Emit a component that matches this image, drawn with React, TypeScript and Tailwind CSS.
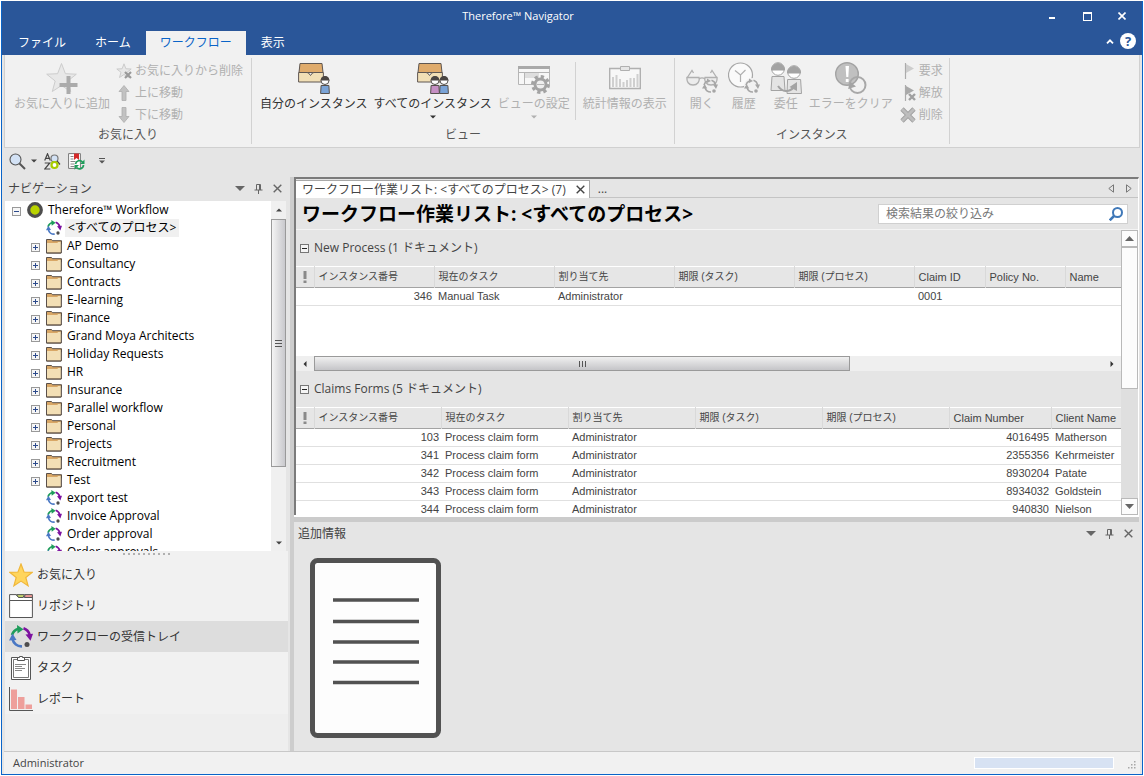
import { useState } from 'react';
import type { ReactNode } from 'react';
import clsx from 'clsx';

/* ---------- icons ---------- */

function WorkflowIcon({ className }: { className: string }) {
  return (
    <svg viewBox="0 0 24 24" className={className} fill="none">
      <path d="M3 10A9.500 9.500 0 0 1 9.500 3.800" stroke="#1f9d5b" strokeWidth="2.600" />
      <path d="M8 0l6.500 4.300L8.500 8.500z" fill="#1f9d5b" />
      <path d="M14.500 3.300a9.500 9.500 0 0 1 6.200 6.700" stroke="#7d12a0" strokeWidth="2.600" />
      <path d="M16.500 9.500l7.500-.8-2.500 7z" fill="#7d12a0" />
      <path d="M3.500 14a9 9 0 0 0 9.500 7.300" stroke="#4a78c4" strokeWidth="2.600" />
      <path d="M0 15.500l3.500-7 4 6.500z" fill="#4a78c4" />
      <circle cx="18" cy="19.500" r="2.500" fill="#4d4d4d" />
    </svg>
  );
}

function FolderIcon() {
  return (
    <svg viewBox="0 0 16 16" className="h-4 w-4 shrink-0">
      <path d="M.5 15V1.500h5l1 1.200h9V6H15v9z" fill="#d9a766" stroke="#5a5049" />
      <path d="M1 14.500V5h10.200l1-1H15v10.500z" fill="#f3dfb5" />
      <path d="M.5 15h14.800V3" fill="none" stroke="#5a5049" />
    </svg>
  );
}

function BigStarAddIcon() {
  return (
    <svg viewBox="0 0 32 32" className="h-8 w-8">
      <path
        d="M15.500 1.500l3.900 10.200 10.900.5-8.500 6.800 2.900 10.500-9.200-6-9.200 6L9.200 19 .7 12.200l10.900-.5z"
        fill="#e8e8e8"
        stroke="#cdcdcd"
      />
      <path d="M20.500 14h4v7h7v4h-7v7h-4v-7h-7v-4h7z" fill="#ababab" />
    </svg>
  );
}

function SmallStarRemoveIcon() {
  return (
    <svg viewBox="0 0 16 16" className="h-4 w-4">
      <path d="M8 .8l1.900 5 5.300.2-4.200 3.300 1.500 5.200L8 11.500l-4.500 3L5 9.300.8 6l5.300-.2z" fill="#e8e8e8" stroke="#cbcbcb" />
      <path d="M9 9l6 6M15 9l-6 6" stroke="#9a9a9a" strokeWidth="2.200" />
    </svg>
  );
}

function ArrowIcon({ down }: { down?: boolean }) {
  return (
    <svg viewBox="0 0 16 16" className="h-4 w-4">
      <path
        d={down ? 'M8 15.500l5-6h-3V.5H6v9H3z' : 'M8 .5l5 6h-3v9H6v-9H3z'}
        fill="#c2c2c2"
        stroke="#adadad"
        strokeWidth=".8"
      />
    </svg>
  );
}

function Tray() {
  return (
    <>
      <path d="M2 1.500h22l1 9H1z" fill="#dfab6c" stroke="#5f5752" />
      <path d="M.6 10.500H9l1.500.5 2 2.500 2-2.500 1.500-.5h9.400v9.500H.6z" fill="#f1dfb6" stroke="#5f5752" />
    </>
  );
}

function Person({ x, color }: { x: number; color: string }) {
  return (
    <g transform={`translate(${x} 0)`}>
      <path d="M.6 31.500l.5-8h7.800l.5 8z" fill={color} stroke="#55504d" />
      <circle cx="5" cy="18.500" r="4" fill="#fff" stroke="#55504d" />
      <path d="M.6 18.500a4.400 4.400 0 0 1 8.800 0z" fill="#4a4543" />
    </g>
  );
}

function MyInstancesIcon() {
  return (
    <svg viewBox="0 0 32 32" className="h-8 w-8">
      <Tray />
      <Person x={22} color="#7aa3d6" />
    </svg>
  );
}

function AllInstancesIcon() {
  return (
    <svg viewBox="0 0 32 32" className="h-8 w-8">
      <Tray />
      <Person x={13} color="#c58fc4" />
      <Person x={22} color="#7aa3d6" />
    </svg>
  );
}

function ViewSettingsIcon() {
  return (
    <svg viewBox="0 0 32 32" className="h-8 w-8" fill="none">
      <path d="M.5 4.500h31v18H.5z" fill="#f7f7f7" stroke="#b5b5b5" />
      <path d="M0 4h32v3H0z" fill="#a9a9a9" />
      <path d="M1 10.500h31M6.500 10v12" stroke="#b5b5b5" />
      <path d="M7 11h14v5H7z" fill="#dedede" />
      <circle cx="22.500" cy="22.500" r="8" stroke="#a3a3a3" strokeWidth="3" strokeDasharray="3.300 2.980" />
      <circle cx="22.500" cy="22.500" r="5.500" stroke="#a3a3a3" strokeWidth="3" fill="#eee" />
      <path d="M19 22.500h7" stroke="#b5b5b5" />
    </svg>
  );
}

function StatisticsIcon() {
  return (
    <svg viewBox="0 0 32 32" className="h-8 w-8" fill="none">
      <path d="M.7 6.500h30.600v20H.7z" fill="#f7f7f7" stroke="#b0b0b0" strokeWidth="1.400" />
      <path d="M11.500 4.500h9v4h-9z" fill="#e6e6e6" stroke="#b0b0b0" />
      <path
        d="M4 25v-10M7.500 25v-12M11 25v-8M14.500 25v-5M18 25v-7M21.500 25v-9M25 25v-9M28.500 25V12"
        stroke="#cfcfcf"
        strokeWidth="2"
      />
    </svg>
  );
}

function GreyCycle() {
  return (
    <g transform="translate(16 16)" fill="none" stroke="#a6a6a6" strokeWidth="1.600">
      <path d="M2 7a6 6 0 0 1 3.500-4M9.500 2.200a6 6 0 0 1 4 5M3 9.500a6 6 0 0 0 6 4.500" />
      <path d="M5 .5L9 3 5 5zM11 6.500h5l-2 4.500zM0 10.500l2.700-4.500 2.500 4.500z" fill="#a6a6a6" stroke="none" />
      <circle cx="12" cy="13" r="1.800" fill="#a6a6a6" stroke="none" />
    </g>
  );
}

function GlassesIcon() {
  return (
    <svg viewBox="0 0 32 32" className="h-8 w-8" fill="none" stroke="#b0b0b0" strokeWidth="1.300">
      <path d="M1 16L6 8.500l1.500 2.500M31 16L26 8.500 24.500 11" />
      <path d="M1 15.500h12c1 4-1.500 7.500-6 7.500s-6.500-3.500-6-7.500zM19 15.500h12c.5 4-1.500 7.500-6 7.500s-7-3.500-6-7.500z" fill="#ececec" />
      <path d="M13 17c2-1.500 4-1.500 6 0" />
      <GreyCycle />
    </svg>
  );
}

function HistoryIcon() {
  return (
    <svg viewBox="0 0 32 32" className="h-8 w-8" fill="none">
      <circle cx="12.500" cy="13" r="12" fill="#fafafa" stroke="#a6a6a6" strokeWidth="1.200" />
      <path d="M7 8.500l5.500 4.500 5-5M12.500 13v7" stroke="#b0b0b0" strokeWidth="1.200" />
      <circle cx="24" cy="24" r="8" fill="#f1f1f1" />
      <GreyCycle />
    </svg>
  );
}

function DelegateIcon() {
  return (
    <svg viewBox="0 0 32 32" className="h-8 w-8" fill="#e4e4e4" stroke="#a3a3a3">
      <path d="M1 28.500l1-14h12l1 14zM17 31.500l.6-14h13l.9 14z" />
      <circle cx="8" cy="7" r="6.300" fill="#fff" />
      <circle cx="24" cy="10" r="6.300" fill="#fff" />
      <path d="M1.500 8a6.500 6.500 0 0 1 13 0zM17.500 11a6.500 6.500 0 0 1 13 0z" fill="#a3a3a3" />
      <path d="M8 24c4 6 11 7 16 1" fill="none" strokeWidth="2" />
      <path d="M19.500 25l7.500-5v9z" fill="#a3a3a3" stroke="none" />
    </svg>
  );
}

function ClearErrorIcon() {
  return (
    <svg viewBox="0 0 32 32" className="h-8 w-8" fill="none">
      <circle cx="12" cy="12" r="11.300" fill="#c0c0c0" stroke="#a3a3a3" strokeWidth="1.400" />
      <path d="M10.500 4h3.500l-.7 11h-2zM10.800 17h2.800v3h-2.800z" fill="#fff" />
      <circle cx="22.500" cy="23" r="8" stroke="#a8a8a8" strokeWidth="2" />
      <path d="M13 27l2.500-7 5.500 4.500z" fill="#a3a3a3" />
    </svg>
  );
}

function FlagIcon({ cross }: { cross?: boolean }) {
  return (
    <svg viewBox="0 0 16 16" className="h-4 w-4" fill="none">
      <path d="M5.500 0v16" stroke="#ababab" strokeWidth="1.200" />
      <path d="M6 1l8 4.500L6 10z" fill={cross ? '#a9a9a9' : '#cdcdcd'} />
      {cross && <path d="M9 9l6 6M15 9l-6 6" stroke="#a0a0a0" strokeWidth="2.400" />}
    </svg>
  );
}

function DeleteIcon() {
  return (
    <svg viewBox="0 0 16 16" className="h-4 w-4">
      <path d="M2 2l12 12M14 2L2 14" stroke="#9f9f9f" strokeWidth="4.600" />
      <path d="M2 2l12 12M14 2L2 14" stroke="#bdbdbd" strokeWidth="3" />
    </svg>
  );
}

function Caret({ className }: { className?: string }) {
  return (
    <svg viewBox="0 0 6 4" className={clsx('h-1 w-1.5', className)}>
      <path d="M0 .5h6L3 3.500z" fill="currentColor" />
    </svg>
  );
}

function CloseGlyph() {
  return (
    <svg viewBox="0 0 9 9" className="h-[9px] w-[9px]" stroke="currentColor" strokeWidth="1.400">
      <path d="M.7.7l7.600 7.600M8.300.7L.7 8.300" />
    </svg>
  );
}

function PanelButtons() {
  return (
    <div className="flex items-center gap-2 text-[#666]">
      <button aria-label="メニュー" className="flex h-4 w-[11px] items-center justify-center">
        <svg viewBox="0 0 10 5" className="h-[5px] w-[10px]"><path d="M0 0h10L5 5z" fill="currentColor" /></svg>
      </button>
      <button aria-label="固定" className="flex h-4 w-[11px] items-center justify-center">
        <svg viewBox="0 0 9 10" className="h-[10px] w-[9px]" fill="none" stroke="currentColor">
          <path d="M2.500 6V.5h4V6M5.500.5V6M.5 6h8M4.500 6v4" />
        </svg>
      </button>
      <button aria-label="閉じる" className="flex h-4 w-[11px] items-center justify-center">
        <CloseGlyph />
      </button>
    </div>
  );
}

/* ---------- ribbon ---------- */

interface BigButtonProps {
  icon: ReactNode;
  label: string;
  enabled?: boolean;
  menu?: boolean;
  className?: string;
}

function BigButton({ icon, label, enabled, menu, className }: BigButtonProps) {
  return (
    <button
      disabled={!enabled}
      className={clsx(
        'flex flex-col items-center whitespace-nowrap',
        enabled ? 'text-[#333]' : 'text-[#b0b0b0]',
        className,
      )}
    >
      {icon}
      <span className="leading-5">{label}</span>
      {menu && <Caret className="mt-px" />}
    </button>
  );
}

function SmallButton({ icon, label }: { icon: ReactNode; label: string }) {
  return (
    <button disabled className="flex h-[22px] items-center gap-[3px] whitespace-nowrap text-[#b0b0b0]">
      {icon}
      <span>{label}</span>
    </button>
  );
}

function RibbonGroup({ title, className, children }: { title: string; className?: string; children: ReactNode }) {
  return (
    <div className="my-[3px] flex flex-col border-r border-[#d2d2d2]">
      <div className={clsx('flex flex-1 items-start', className)}>{children}</div>
      <div className="text-center leading-[18px] text-[#555]">{title}</div>
    </div>
  );
}

function Ribbon() {
  return (
    <div className="mx-0.5 flex h-[93px] border-x border-b border-[#d0d0d0] bg-[#f1f1f1]">
      <RibbonGroup title="お気に入り" className="gap-1.5 pl-[9px] pr-2">
        <BigButton icon={<BigStarAddIcon />} label="お気に入りに追加" className="pt-1" />
        <div className="pt-0.5">
          <SmallButton icon={<SmallStarRemoveIcon />} label="お気に入りから削除" />
          <SmallButton icon={<ArrowIcon />} label="上に移動" />
          <SmallButton icon={<ArrowIcon down />} label="下に移動" />
        </div>
      </RibbonGroup>
      <RibbonGroup title="ビュー" className="gap-1.5 pt-1 pr-[7px] pl-2">
        <BigButton icon={<MyInstancesIcon />} label="自分のインスタンス" enabled />
        <BigButton icon={<AllInstancesIcon />} label="すべてのインスタンス" enabled menu />
        <BigButton icon={<ViewSettingsIcon />} label="ビューの設定" menu />
        <div className="-ml-px mr-px h-[58px] border-r border-[#d2d2d2]" />
        <BigButton icon={<StatisticsIcon />} label="統計情報の表示" />
      </RibbonGroup>
      <RibbonGroup title="インスタンス" className="gap-2.5 pr-1.5 pl-[11px]">
        <BigButton icon={<GlassesIcon />} label="開く" className="pt-1" />
        <BigButton icon={<HistoryIcon />} label="履歴" className="pt-1" />
        <BigButton icon={<DelegateIcon />} label="委任" className="pt-1" />
        <BigButton icon={<ClearErrorIcon />} label="エラーをクリア" className="-ml-[3px] pt-1" />
        <div className="-ml-[3px] pt-0.5">
          <SmallButton icon={<FlagIcon />} label="要求" />
          <SmallButton icon={<FlagIcon cross />} label="解放" />
          <SmallButton icon={<DeleteIcon />} label="削除" />
        </div>
      </RibbonGroup>
    </div>
  );
}

const ribbonTabs = ['ファイル', 'ホーム', 'ワークフロー', '表示'];

function TitleBar() {
  return (
    <header className="bg-[#2a5699] text-white">
      <div className="flex h-[30px] items-center">
        <h1 className="flex-1 text-center text-[11px]">Therefore™ Navigator</h1>
        <div className="flex w-[108px] shrink-0 items-center gap-[17px] pl-[9px]">
          <button aria-label="最小化" className="flex h-[18px] w-[18px] items-center justify-center">
            <span className="mt-1 h-0.5 w-1.5 bg-white" />
          </button>
          <button aria-label="最大化" className="flex h-[18px] w-[18px] items-center justify-center">
            <span className="h-[9px] w-[9px] border border-t-2 border-white" />
          </button>
          <button aria-label="閉じる" className="flex h-[18px] w-[18px] items-center justify-center">
            <svg viewBox="0 0 8 8" className="h-2 w-2" stroke="#fff" strokeWidth="1.600"><path d="M.5.5l7 7M7.500.5l-7 7" /></svg>
          </button>
        </div>
      </div>
      <div className="flex h-6 items-stretch justify-between pl-0.5">
        <nav className="flex gap-px">
          {ribbonTabs.map((tab) => (
            <button
              key={tab}
              className={clsx(
                'px-3.5',
                tab === 'ワークフロー' && 'bg-[#f1f1f1] text-[#0a64c8]',
              )}
            >
              {tab}
            </button>
          ))}
        </nav>
        <div className="flex items-center gap-1.5 pr-1.5 pb-1">
          <button aria-label="リボンを折りたたむ">
            <svg viewBox="0 0 8 5" className="h-[5px] w-2" fill="none" stroke="#fff" strokeWidth="1.800"><path d="M1 4.300l3-3 3 3" /></svg>
          </button>
          <button aria-label="ヘルプ" className="h-4 w-4 rounded-full bg-white text-[13px] leading-4 font-bold text-[#2a5699]">
            ?
          </button>
        </div>
      </div>
    </header>
  );
}

function QuickToolbar() {
  return (
    <div className="flex h-[29px] items-center pb-[3px] pl-[7px] text-[#444]">
      <button aria-label="検索" className="flex items-center gap-[5px]">
        <svg viewBox="0 0 17 17" className="h-[17px] w-[17px]" fill="none">
          <circle cx="6.500" cy="6.500" r="5.500" fill="#d3e2f5" stroke="#555" strokeWidth="1.100" />
          <path d="M10.500 10.500l5.500 5.500" stroke="#555" strokeWidth="2" />
        </svg>
        <Caret />
      </button>
      <button aria-label="索引検索" className="ml-[7px]">
        <svg viewBox="0 0 17 17" className="h-[17px] w-[17px]" fill="none" stroke="#444" strokeWidth="1.200">
          <path d="M.7 7.500L3.500.8l2.800 6.700M1.700 5.300h3.700M.7 10h5L.7 16h5.600" />
          <circle cx="10.500" cy="5.500" r="3.500" fill="#d3e2f5" stroke="#777" />
          <path d="M13 8l3 3.500" />
          <circle cx="10.500" cy="12" r="3" fill="#fff" stroke="#a8cc00" strokeWidth="2.200" />
        </svg>
      </button>
      <button aria-label="更新" className="ml-[7px]">
        <svg viewBox="0 0 17 17" className="h-[17px] w-[17px]" fill="none">
          <path d="M.6.6h11.800v14.800H.6z" fill="#fff" stroke="#777" />
          <path d="M2.500 3.500h3M2.500 6h3M2.500 8.500h5M2.500 11h4M2.500 13.500h4" stroke="#888" />
          <path d="M6 .5h5V7L8.500 5 6 7z" fill="#d42a2a" />
          <path d="M7.500 11a4 4 0 0 1 7-2M15.500 12a4 4 0 0 1-7 2.500" stroke="#1f9d5b" strokeWidth="1.700" />
          <path d="M16.500 6.500v4.500h-4.500zM6.500 16.800V12h4.500z" fill="#1f9d5b" />
        </svg>
      </button>
      <button aria-label="ツールバーのカスタマイズ" className="ml-3.5">
        <svg viewBox="0 0 6 6" className="h-1.5 w-1.5" fill="#555"><path d="M0 0h6v1H0zM0 2.500h6L3 5.500z" /></svg>
      </button>
    </div>
  );
}

/* ---------- navigation ---------- */

const folders = [
  'AP Demo', 'Consultancy', 'Contracts', 'E-learning', 'Finance', 'Grand Moya Architects',
  'Holiday Requests', 'HR', 'Insurance', 'Parallel workflow', 'Personal', 'Projects',
  'Recruitment', 'Test',
];
const processes = ['export test', 'Invoice Approval', 'Order approval', 'Order approvals'];

function Expander({ open }: { open?: boolean }) {
  return (
    <button
      aria-label={open ? '折りたたむ' : '展開'}
      className="mt-0.5 flex h-[9px] w-[9px] shrink-0 items-center justify-center border border-[#999] bg-[#f6f6f6]"
    >
      <svg viewBox="0 0 5 5" className="h-[5px] w-[5px]" stroke="#2c4a8c">
        <path d={open ? 'M0 2.500h5' : 'M0 2.500h5M2.500 0v5'} />
      </svg>
    </button>
  );
}

function NavTree() {
  return (
    <div className="flex min-h-0 flex-1 border-r-2 border-[#e5e5e5] bg-white">
      <ul className="min-w-0 flex-1 overflow-hidden text-[12px] text-black">
        <li className="flex h-[18px] items-center pl-[7px]">
          <Expander open />
          <svg viewBox="0 0 16 16" className="ml-1.5 h-4 w-4"><circle cx="8" cy="8" r="6.300" fill="#b9d300" stroke="#4d4d4d" strokeWidth="3.200" /></svg>
          <span className="ml-[5px]">Therefore™ Workflow</span>
        </li>
        <li className="flex h-[18px] items-center pl-[41px]">
          <WorkflowIcon className="h-4 w-4" />
          <button className="ml-[3px] bg-[#f0f0f0] px-[3px] leading-[18px]">&lt;すべてのプロセス&gt;</button>
        </li>
        {folders.map((name) => (
          <li key={name} className="flex h-[18px] items-center pl-[26px]">
            <Expander />
            <span className="ml-1.5"><FolderIcon /></span>
            <button className="ml-[5px]">{name}</button>
          </li>
        ))}
        {processes.map((name) => (
          <li key={name} className="flex h-[18px] items-center pl-[41px]">
            <WorkflowIcon className="h-4 w-4" />
            <button className="ml-[5px]">{name}</button>
          </li>
        ))}
      </ul>
      <div className="flex w-[15px] flex-col items-center bg-[#f0f0f0] text-[#444]">
        <Caret className="my-[7px] rotate-180" />
        <div className="flex h-[248px] w-full flex-col items-center justify-center gap-0.5 border border-[#9a9a9a] bg-linear-to-r from-[#f4f4f4] to-[#c9c9cd]">
          <span className="h-px w-[7px] bg-[#555]" />
          <span className="h-px w-[7px] bg-[#555]" />
          <span className="h-px w-[7px] bg-[#555]" />
        </div>
        <div className="flex-1" />
        <Caret className="my-1.5" />
      </div>
    </div>
  );
}

const sections = [
  {
    label: 'お気に入り',
    icon: (
      <svg viewBox="0 0 24 24" className="h-6 w-6">
        <path d="M12 1l3 8 8.300.3-6.500 5.200 2.300 8.300-7.100-4.700-7.100 4.700 2.300-8.300L.7 9.300 9 9z" fill="#ffd55c" stroke="#f0b73a" strokeWidth="1.200" />
      </svg>
    ),
  },
  {
    label: 'リポジトリ',
    icon: (
      <svg viewBox="0 0 24 24" className="h-6 w-6">
        <path d="M.6 6.500V.6H7L9 3h14.400v3.500z" fill="#fff" stroke="#555" />
        <path d="M7.500.6h8L14 3.500H9.500z" fill="#c3d46a" stroke="#555" />
        <path d="M16 .6h7.400v2.900H15.500z" fill="#ee9a96" stroke="#555" />
        <path d="M.6 6.500h22.800v17H.6z" fill="#fff" stroke="#555" />
      </svg>
    ),
  },
  { label: 'ワークフローの受信トレイ', icon: <WorkflowIcon className="h-6 w-6" /> },
  {
    label: 'タスク',
    icon: (
      <svg viewBox="0 0 24 24" className="h-6 w-6" fill="#fff" stroke="#555">
        <path d="M2.500 1.500h19v22h-19z" />
        <path d="M4.500 3.500h15v18h-15z" stroke="#777" />
        <path d="M8.500 4.500v-3h2v-1h3v1h2v3z" />
        <path d="M6 8.500h11M6 10.500h7M6 12.500h10M6 14.500h7" stroke="#888" />
      </svg>
    ),
  },
  {
    label: 'レポート',
    icon: (
      <svg viewBox="0 0 24 24" className="h-6 w-6">
        <path d="M2 2.500h6V22H2zM9 10h6.500v12H9zM16.500 17.500H23V22h-6.500z" fill="#ee9f9b" />
        <path d="M.5 0v23.500H24" fill="none" stroke="#555" />
      </svg>
    ),
  },
];

function NavPanel() {
  const [active, setActive] = useState(2);

  return (
    <aside className="flex w-[285px] shrink-0 flex-col pr-0.5">
      <div className="flex h-6 items-center justify-between pr-[5px] pb-px pl-[3px]">
        <h2 className="text-[#444]">ナビゲーション</h2>
        <PanelButtons />
      </div>
      <NavTree />
      <div className="flex h-2 items-start justify-center gap-[3px] bg-[#f1f1f1] pt-0.5">
        {Array.from({ length: 10 }, (_, i) => (
          <span key={i} className="h-0.5 w-0.5 bg-[#b0b0b0]" />
        ))}
      </div>
      <div className="bg-[#f1f1f1]">
        {sections.map((section, i) => (
          <button
            key={section.label}
            onClick={() => setActive(i)}
            className={clsx(
              'flex h-[31px] w-full items-center gap-1 pl-1 text-[#333]',
              i === active && 'bg-[#ddd]',
            )}
          >
            {section.icon}
            {section.label}
          </button>
        ))}
      </div>
      <div className="h-[37px] bg-[#eee]" />
    </aside>
  );
}

/* ---------- work list ---------- */

interface Column {
  title: string;
  width?: string;
  right?: boolean;
}

const newProcessColumns: Column[] = [
  { title: 'インスタンス番号', width: 'w-[120px]', right: true },
  { title: '現在のタスク', width: 'w-[120px]' },
  { title: '割り当て先', width: 'w-[120px]' },
  { title: '期限 (タスク)', width: 'w-[120px]' },
  { title: '期限 (プロセス)', width: 'w-[120px]' },
  { title: 'Claim ID', width: 'w-[71px]' },
  { title: 'Policy No.', width: 'w-[80px]' },
  { title: 'Name' },
];
const newProcessRows = [['346', 'Manual Task', 'Administrator', '', '', '0001', '', '']];

const claimsColumns: Column[] = [
  { title: 'インスタンス番号', width: 'w-[127px]', right: true },
  { title: '現在のタスク', width: 'w-[127px]' },
  { title: '割り当て先', width: 'w-[127px]' },
  { title: '期限 (タスク)', width: 'w-[127px]' },
  { title: '期限 (プロセス)', width: 'w-[127px]' },
  { title: 'Claim Number', width: 'w-[102px]', right: true },
  { title: 'Client Name' },
];
const claimsRows = [
  ['103', 'Process claim form', 'Administrator', '', '', '4016495', 'Matherson'],
  ['341', 'Process claim form', 'Administrator', '', '', '2355356', 'Kehrmeister'],
  ['342', 'Process claim form', 'Administrator', '', '', '8930204', 'Patate'],
  ['343', 'Process claim form', 'Administrator', '', '', '8934032', 'Goldstein'],
  ['344', 'Process claim form', 'Administrator', '', '', '940830', 'Nielson'],
];

function GroupHeader({ title }: { title: string }) {
  return (
    <div className="flex h-9 items-center gap-[5px] pl-1 text-[#444]">
      <button aria-label="折りたたむ" className="flex h-[9px] w-[9px] items-center justify-center border border-[#777] bg-[#f4f4f4]">
        <span className="h-px w-[5px] bg-[#222]" />
      </button>
      <h3>{title}</h3>
    </div>
  );
}

function WorkTable({ columns, rows }: { columns: Column[]; rows: string[][] }) {
  return (
    <table className="w-full table-fixed border-collapse bg-white font-['Liberation_Sans','Noto_Sans_CJK_JP',sans-serif] text-[11px] text-[#444]">
      <thead>
        <tr className="h-[21px] border-t border-b border-t-white border-b-[#a3a3a3] bg-[#e6e6e6]">
          <th aria-label="優先度" className="w-[18px] border-r border-[#d9d9d9] p-0">
            <svg viewBox="0 0 4 12" className="mx-auto h-3 w-1" fill="#8a8a8a"><path d="M.5 0h3v8h-3zM.5 9.500h3V12h-3z" /></svg>
          </th>
          {columns.map((col) => (
            <th
              key={col.title}
              className={clsx(
                'overflow-hidden border-r border-[#d9d9d9] p-0 pl-1 text-left font-normal whitespace-nowrap last:border-r-0',
                /^[A-Z]/.test(col.title) ? 'text-[11px]' : 'text-[10px]',
                col.width,
              )}
            >
              {col.title}
            </th>
          ))}
        </tr>
      </thead>
      <tbody>
        {rows.map((row) => (
          <tr key={row[0]} className="h-[18px] border-b border-[#e0e0e0]">
            <td />
            {row.map((cell, i) => (
              <td
                key={i}
                className={clsx(
                  'overflow-hidden p-0 leading-[17px] whitespace-nowrap',
                  columns[i].right ? 'pr-0.5 text-right' : 'pl-1',
                )}
              >
                {cell}
              </td>
            ))}
          </tr>
        ))}
      </tbody>
    </table>
  );
}

function HorizontalScrollbar() {
  return (
    <div className="flex h-[15px] items-center bg-[#efefef] text-[#333]">
      <Caret className="mx-1.5 rotate-90" />
      <div className="flex h-[15px] w-[65%] items-center justify-center gap-0.5 border border-[#9a9a9a] bg-linear-to-b from-[#f0f0f0] to-[#c5c5c8]">
        <span className="h-1.5 w-px bg-[#555]" />
        <span className="h-1.5 w-px bg-[#555]" />
        <span className="h-1.5 w-px bg-[#555]" />
      </div>
      <div className="flex-1" />
      <Caret className="mx-1.5 -rotate-90" />
    </div>
  );
}

function VerticalScrollbar() {
  return (
    <div className="flex w-[17px] shrink-0 flex-col bg-[#dfdfdf] text-[#666]">
      <div className="flex h-[17px] items-center justify-center border border-[#b9b9b9] bg-[#fcfcfc]">
        <svg viewBox="0 0 9 5" className="h-[5px] w-[9px]"><path d="M0 5h9L4.500 0z" fill="currentColor" /></svg>
      </div>
      <div className="h-[142px] border border-[#b9b9b9] bg-[#fcfcfc]" />
      <div className="flex-1" />
      <div className="flex h-[17px] items-center justify-center border border-[#b9b9b9] bg-[#fcfcfc]">
        <svg viewBox="0 0 9 5" className="h-[5px] w-[9px]"><path d="M0 0h9L4.500 5z" fill="currentColor" /></svg>
      </div>
    </div>
  );
}

function WorkList() {
  return (
    <section className="flex min-h-0 flex-1 flex-col border-t-2 border-r border-l-2 border-[#7b7b7b] border-r-white">
      <div className="flex h-[19px] shrink-0 items-stretch justify-between border-b border-[#c4c4c4] pt-px text-[#444]">
        <div className="flex">
          <div className="-mb-px flex items-center gap-2.5 border-t border-r border-[#a8a8a8] bg-white pr-1 pl-1.5 whitespace-nowrap">
            <span>ワークフロー作業リスト: &lt;すべてのプロセス&gt; (7)</span>
            <button aria-label="タブを閉じる"><CloseGlyph /></button>
          </div>
          <button className="px-2 leading-4">...</button>
        </div>
        <div className="flex items-center gap-3 pr-1.5">
          <button aria-label="前のタブ">
            <svg viewBox="0 0 6 9" className="h-[9px] w-1.5" fill="none" stroke="#777"><path d="M5.500.8v7.400L.8 4.500z" /></svg>
          </button>
          <button aria-label="次のタブ">
            <svg viewBox="0 0 6 9" className="h-[9px] w-1.5" fill="none" stroke="#777"><path d="M.5.8v7.400l4.700-3.700z" /></svg>
          </button>
        </div>
      </div>
      <div className="flex h-8 shrink-0 items-center justify-between border-b border-[#f4f4f4] pr-2.5 pl-1.5">
        <h2 className="text-[19px] leading-7 font-bold whitespace-nowrap text-black">
          ワークフロー作業リスト: &lt;すべてのプロセス&gt;
        </h2>
        <div className="flex h-5 w-[250px] items-center border border-[#d0d0d0] bg-white pr-1 pl-[7px]">
          <input
            type="text"
            aria-label="検索結果の絞り込み"
            placeholder="検索結果の絞り込み"
            className="min-w-0 flex-1 bg-transparent outline-none placeholder:text-[#777]"
          />
          <button aria-label="検索">
            <svg viewBox="0 0 14 14" className="h-3.5 w-3.5" fill="none" stroke="#3f78b8">
              <circle cx="8.500" cy="5.500" r="4.500" strokeWidth="2" />
              <path d="M5 9l-4.300 4.300" strokeWidth="2.600" />
            </svg>
          </button>
        </div>
      </div>
      <div className="flex min-h-0 flex-1">
        <div className="min-w-0 flex-1 overflow-hidden">
          <GroupHeader title="New Process (1 ドキュメント)" />
          <div className="h-[90px] bg-white">
            <WorkTable columns={newProcessColumns} rows={newProcessRows} />
          </div>
          <HorizontalScrollbar />
          <GroupHeader title="Claims Forms (5 ドキュメント)" />
          <WorkTable columns={claimsColumns} rows={claimsRows} />
        </div>
        <VerticalScrollbar />
      </div>
    </section>
  );
}

function DetailsPanel() {
  return (
    <section className="h-[229px] shrink-0">
      <div className="flex h-6 items-center justify-between pr-[5px] pb-px pl-1">
        <h2 className="text-[#444]">追加情報</h2>
        <PanelButtons />
      </div>
      <svg viewBox="0 0 131 180" className="mt-3 ml-4 h-[180px] w-[131px]">
        <rect x="2.500" y="2.500" width="126" height="175" rx="5" fill="#fdfdfd" stroke="#525252" strokeWidth="5" />
        <path d="M23 42h86M23 63.500h86M23 84h86M23 104h86M23 124.500h86" stroke="#525252" strokeWidth="3.500" />
      </svg>
    </section>
  );
}

function StatusBar() {
  return (
    <footer className="mx-0.5 flex h-[23px] shrink-0 items-center justify-between border-t border-[#c8c8c8] bg-[#f1f1f1] pl-[9px] text-[11px] text-[#444]">
      <span>Administrator</span>
      <div className="flex items-center gap-3.5 pr-1">
        <div role="progressbar" aria-label="進行状況" className="h-3 w-[140px] border border-white bg-[#d7e2f3]" />
        <svg viewBox="0 0 8 8" className="mt-1 h-2 w-2" fill="#a8a8a8">
          <path d="M6 0h1.500v1.500H6zM6 3h1.500v1.500H6zM6 6h1.500v1.500H6zM3 3h1.500v1.500H3zM3 6h1.500v1.500H3zM0 6h1.500v1.500H0z" />
        </svg>
      </div>
    </footer>
  );
}

export default function App() {
  return (
    <div className="h-screen overflow-hidden bg-white p-px font-['Open_Sans','Noto_Sans_CJK_JP',sans-serif] text-[12px] leading-4">
      <div className="flex h-full flex-col border border-t-0 border-[#0a64c8] bg-[#e5e5e5]">
        <TitleBar />
        <Ribbon />
        <QuickToolbar />
        <div className="flex min-h-0 flex-1 pl-[3px]">
          <NavPanel />
          <div className="w-1 shrink-0 bg-[#cdcdcd]" />
          <main className="mr-[3px] flex min-w-0 flex-1 flex-col">
            <WorkList />
            <div className="h-[7px] shrink-0 border-t-2 border-white bg-[#cbcbcb]" />
            <DetailsPanel />
          </main>
        </div>
        <StatusBar />
      </div>
    </div>
  );
}
